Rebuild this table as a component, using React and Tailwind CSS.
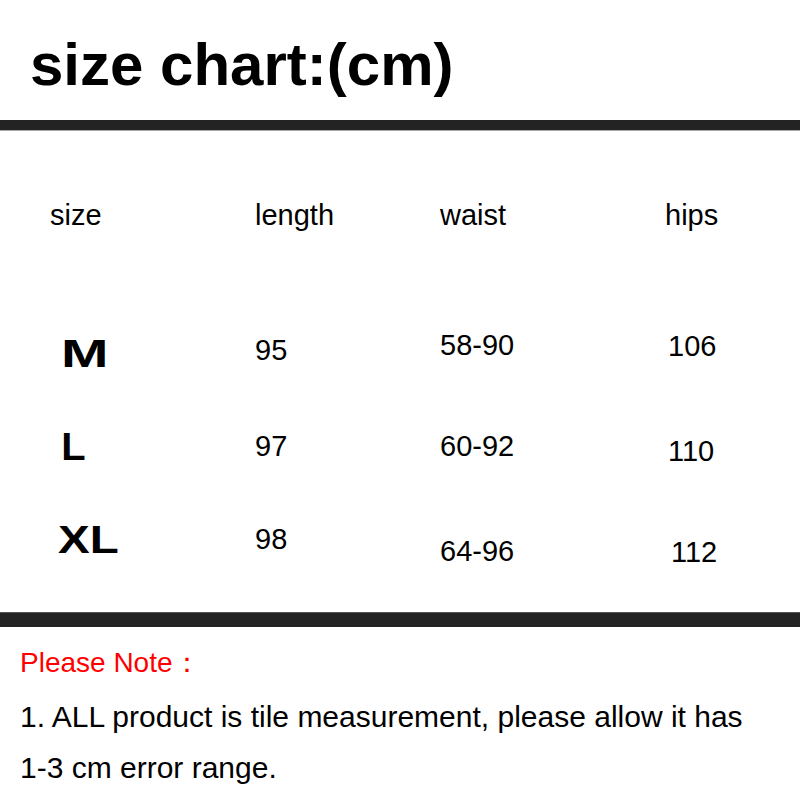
import React from 'react';

const rows = [
  {
    size: 'M',
    sizeClass: 'pt-[35px] pl-[2px] scale-x-[1.5]',
    cells: [
      { text: '95', pad: 'pt-[36px]' },
      { text: '58-90', pad: 'pt-[31px]' },
      { text: '106', pad: 'pt-[32px] pl-[3px]' },
    ],
  },
  {
    size: 'L',
    sizeClass: 'pt-[28px] pl-[3px] scale-x-[1.05]',
    cells: [
      { text: '97', pad: 'pt-[32px]' },
      { text: '60-92', pad: 'pt-[32px]' },
      { text: '110', pad: 'pt-[37px] pl-[3px]' },
    ],
  },
  {
    size: 'XL',
    sizeClass: 'pt-[21px] scale-x-[1.25]',
    cells: [
      { text: '98', pad: 'pt-[25px]' },
      { text: '64-96', pad: 'pt-[37px]' },
      { text: '112', pad: 'pt-[38px] pl-[6px]' },
    ],
  },
];

function SizeRow({ row }) {
  return (
    <div className="grid grid-cols-[255px_185px_225px_1fr] h-[100px]">
      <div className="pl-[58px]">
        <span className={`inline-block origin-left font-bold text-[38px] leading-none ${row.sizeClass}`}>
          {row.size}
        </span>
      </div>
      {row.cells.map((cell) => (
        <div key={cell.text} className={`text-[29px] leading-none ${cell.pad}`}>
          {cell.text}
        </div>
      ))}
    </div>
  );
}

export default function App() {
  return (
    <div className="w-[800px] h-[800px] bg-white text-black overflow-hidden font-['Liberation_Sans',Arial,sans-serif]">
      {/* title */}
      <div className="h-[120px] pt-[35px] pl-[30px]">
        <h1 className="text-[60px] font-bold leading-none">size chart:(cm)</h1>
      </div>
      <div className="h-[10px] bg-[#232323]" />
      <div className="h-px bg-[#a8a8a8]" />

      {/* table */}
      <div className="h-[481px]">
        <div className="grid grid-cols-[255px_185px_225px_1fr] h-[169px] pt-[70px] text-[29px] leading-none">
          <div className="pl-[50px]">size</div>
          <div>length</div>
          <div>waist</div>
          <div>hips</div>
        </div>
        {rows.map((row) => (
          <SizeRow key={row.size} row={row} />
        ))}
      </div>

      <div className="h-[15px] bg-[#232323] border-t border-[#555]" />

      {/* notes */}
      <div className="pt-[22px] pl-[20px] pr-[40px]">
        <p className="text-[28px] leading-none text-[#ff0000]">Please Note：</p>
        <p className="mt-[14px] text-[30px] leading-[51px]">
          1. ALL product is tile measurement, please allow it has 1-3 cm error range.
        </p>
      </div>
    </div>
  );
}
